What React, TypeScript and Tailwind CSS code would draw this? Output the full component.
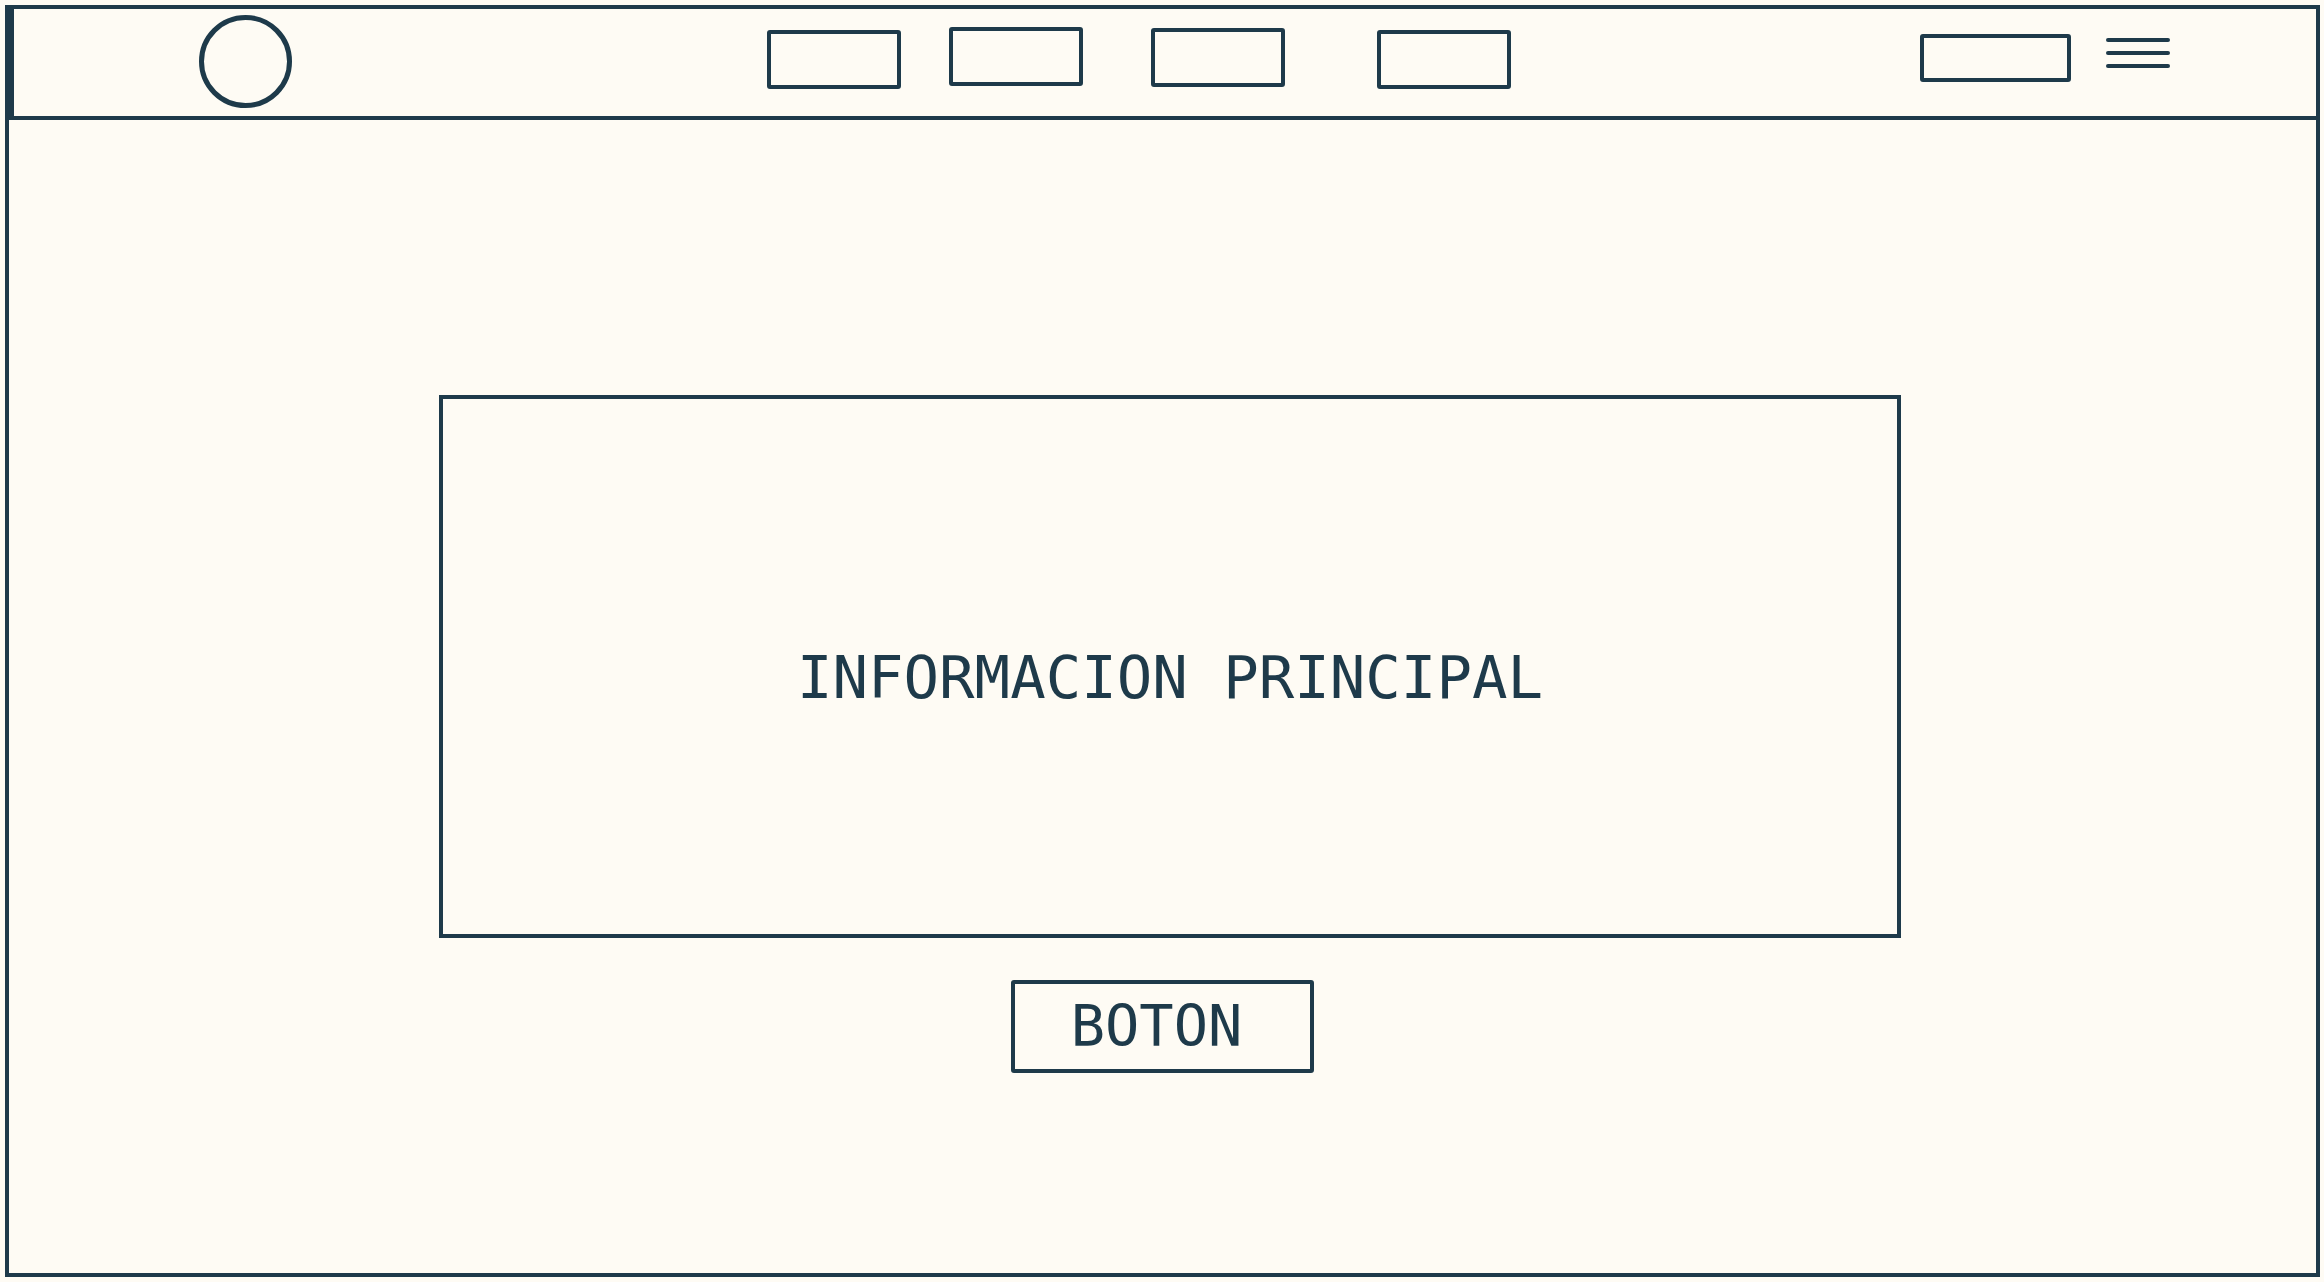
import React from "react";

const ink = "border-[#1e3a4a]";

function NavBox({ className }: { className: string }) {
  return (
    <div
      className={`h-[59px] w-[134px] shrink-0 rounded-[3px] border-[4px] ${ink} ${className}`}
    />
  );
}

export default function App() {
  return (
    <div className="h-[1282px] w-[2324px] overflow-hidden bg-[#fefbf4] pl-[5px] pr-[4px] pt-[5px] font-['DejaVu_Sans_Mono',monospace] text-[#1e3a4a]">
      <div className={`flex h-[1272px] flex-col border-[4px] ${ink}`}>
        {/* Header */}
        <header
          className={`flex h-[111px] shrink-0 items-start border-b-[4px] border-l-[5px] ${ink}`}
        >
          <div
            className={`ml-[185px] mt-[6px] h-[93px] w-[93px] shrink-0 rounded-full border-[5px] ${ink}`}
          />
          <NavBox className="ml-[475px] mt-[21px]" />
          <NavBox className="ml-[48px] mt-[18px]" />
          <NavBox className="ml-[68px] mt-[19px]" />
          <NavBox className="ml-[92px] mt-[21px]" />
          <div
            className={`ml-[409px] mt-[25px] h-[48px] w-[151px] shrink-0 rounded-[3px] border-[4px] ${ink}`}
          />
          <div className="ml-[35px] mt-[29px] flex w-[64px] flex-col gap-[9px]">
            <span className="h-[4px] rounded-full bg-[#1e3a4a]" />
            <span className="h-[4px] rounded-full bg-[#1e3a4a]" />
            <span className="h-[4px] rounded-full bg-[#1e3a4a]" />
          </div>
        </header>

        {/* Body */}
        <main className="flex flex-1 flex-col items-start">
          <section
            className={`ml-[430px] mt-[275px] flex h-[543px] w-[1462px] items-center justify-center border-[4px] ${ink} pt-[22px]`}
          >
            <span className="text-[59px] leading-none">INFORMACION PRINCIPAL</span>
          </section>
          <button
            className={`ml-[1002px] mt-[42px] flex h-[93px] w-[303px] items-center justify-center rounded-[3px] border-[4px] ${ink} pr-[12px] text-[57px] leading-none`}
          >
            BOTON
          </button>
        </main>
      </div>
    </div>
  );
}
